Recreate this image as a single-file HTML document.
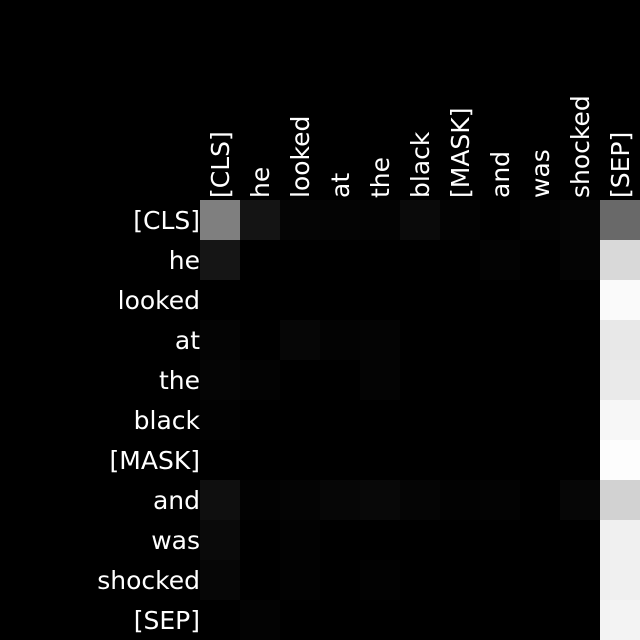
<!DOCTYPE html>
<html><head><style>html,body{margin:0;padding:0;background:#000;width:640px;height:640px;overflow:hidden}</style></head>
<body>
<svg width="640" height="640" xmlns="http://www.w3.org/2000/svg" style="display:block">
<rect width="640" height="640" fill="#000"/>
<g font-family="DejaVu Sans, sans-serif" font-size="25" fill="#fff">
<text x="200" y="229" text-anchor="end">[CLS]</text>
<text x="200" y="269" text-anchor="end">he</text>
<text x="200" y="309" text-anchor="end">looked</text>
<text x="200" y="349" text-anchor="end">at</text>
<text x="200" y="389" text-anchor="end">the</text>
<text x="200" y="429" text-anchor="end">black</text>
<text x="200" y="469" text-anchor="end">[MASK]</text>
<text x="200" y="509" text-anchor="end">and</text>
<text x="200" y="549" text-anchor="end">was</text>
<text x="200" y="589" text-anchor="end">shocked</text>
<text x="200" y="629" text-anchor="end">[SEP]</text>
<text transform="translate(229,198) rotate(-90)">[CLS]</text>
<text transform="translate(269,198) rotate(-90)">he</text>
<text transform="translate(309,198) rotate(-90)">looked</text>
<text transform="translate(349,198) rotate(-90)">at</text>
<text transform="translate(389,198) rotate(-90)">the</text>
<text transform="translate(429,198) rotate(-90)">black</text>
<text transform="translate(469,198) rotate(-90)">[MASK]</text>
<text transform="translate(509,198) rotate(-90)">and</text>
<text transform="translate(549,198) rotate(-90)">was</text>
<text transform="translate(589,198) rotate(-90)">shocked</text>
<text transform="translate(629,198) rotate(-90)">[SEP]</text>
</g>
<g>
<rect x="200" y="200" width="40" height="40" fill="#7f7f7f"/>
<rect x="240" y="200" width="40" height="40" fill="#141414"/>
<rect x="280" y="200" width="40" height="40" fill="#050505"/>
<rect x="320" y="200" width="40" height="40" fill="#040404"/>
<rect x="360" y="200" width="40" height="40" fill="#030303"/>
<rect x="400" y="200" width="40" height="40" fill="#0a0a0a"/>
<rect x="440" y="200" width="40" height="40" fill="#030303"/>
<rect x="520" y="200" width="40" height="40" fill="#030303"/>
<rect x="560" y="200" width="40" height="40" fill="#050505"/>
<rect x="600" y="200" width="40" height="40" fill="#696969"/>
<rect x="200" y="240" width="40" height="40" fill="#151515"/>
<rect x="480" y="240" width="40" height="40" fill="#030303"/>
<rect x="560" y="240" width="40" height="40" fill="#040404"/>
<rect x="600" y="240" width="40" height="40" fill="#d9d9d9"/>
<rect x="600" y="280" width="40" height="40" fill="#fafafa"/>
<rect x="200" y="320" width="40" height="40" fill="#040404"/>
<rect x="280" y="320" width="40" height="40" fill="#060606"/>
<rect x="320" y="320" width="40" height="40" fill="#030303"/>
<rect x="360" y="320" width="40" height="40" fill="#040404"/>
<rect x="600" y="320" width="40" height="40" fill="#e8e8e8"/>
<rect x="200" y="360" width="40" height="40" fill="#050505"/>
<rect x="240" y="360" width="40" height="40" fill="#030303"/>
<rect x="360" y="360" width="40" height="40" fill="#040404"/>
<rect x="600" y="360" width="40" height="40" fill="#eaeaea"/>
<rect x="200" y="400" width="40" height="40" fill="#020202"/>
<rect x="600" y="400" width="40" height="40" fill="#f7f7f7"/>
<rect x="600" y="440" width="40" height="40" fill="#fdfdfd"/>
<rect x="200" y="480" width="40" height="40" fill="#0f0f0f"/>
<rect x="240" y="480" width="40" height="40" fill="#020202"/>
<rect x="280" y="480" width="40" height="40" fill="#040404"/>
<rect x="320" y="480" width="40" height="40" fill="#060606"/>
<rect x="360" y="480" width="40" height="40" fill="#080808"/>
<rect x="400" y="480" width="40" height="40" fill="#050505"/>
<rect x="440" y="480" width="40" height="40" fill="#020202"/>
<rect x="480" y="480" width="40" height="40" fill="#030303"/>
<rect x="560" y="480" width="40" height="40" fill="#060606"/>
<rect x="600" y="480" width="40" height="40" fill="#d2d2d2"/>
<rect x="200" y="520" width="40" height="40" fill="#0a0a0a"/>
<rect x="280" y="520" width="40" height="40" fill="#020202"/>
<rect x="600" y="520" width="40" height="40" fill="#f0f0f0"/>
<rect x="200" y="560" width="40" height="40" fill="#060606"/>
<rect x="280" y="560" width="40" height="40" fill="#020202"/>
<rect x="360" y="560" width="40" height="40" fill="#020202"/>
<rect x="600" y="560" width="40" height="40" fill="#f0f0f0"/>
<rect x="240" y="600" width="40" height="40" fill="#030303"/>
<rect x="600" y="600" width="40" height="40" fill="#f3f3f3"/>
</g>
</svg>
</body></html>
